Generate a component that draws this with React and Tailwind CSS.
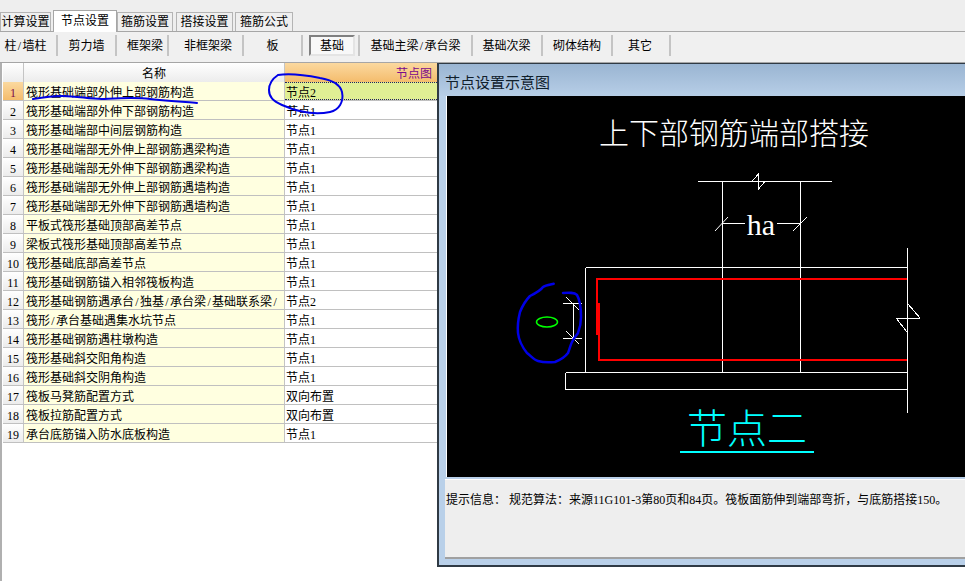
import React from "react";

const FONT = '"Liberation Serif","Noto Sans CJK SC",serif';

const tabs = [
  { t: "计算设置", w: "w-[51px]", cls: "ml-0" },
  { t: "节点设置", w: "w-[64px]", active: true, cls: "ml-[2px]" },
  { t: "箍筋设置", w: "w-[56px]", cls: "ml-0" },
  { t: "搭接设置", w: "w-[57px]", cls: "ml-[3px]" },
  { t: "箍筋公式", w: "w-[58px]", cls: "ml-[2px]" },
];

const tools = [
  { t: "柱/墙柱", w: "w-[58px]", pad: "pr-[5px]" },
  { t: "剪力墙", w: "w-[59px]", pad: "" },
  { t: "框架梁", w: "w-[52px]", pad: "pl-[6px]" },
  { t: "非框架梁", w: "w-[75px]", pad: "pl-[5px]" },
  { t: "板", w: "w-[59px]", pad: "" },
  { t: "基础", w: "w-[57px]", active: true, pad: "" },
  { t: "基础主梁/承台梁", w: "w-[113px]", pad: "" },
  { t: "基础次梁", w: "w-[70px]", pad: "pr-[1px]" },
  { t: "砌体结构", w: "w-[70px]", pad: "" },
  { t: "其它", w: "w-[58px]", pad: "pr-[2px]" },
];

const rows = [
  ["筏形基础端部外伸上部钢筋构造", "节点2"],
  ["筏形基础端部外伸下部钢筋构造", "节点1"],
  ["筏形基础端部中间层钢筋构造", "节点1"],
  ["筏形基础端部无外伸上部钢筋遇梁构造", "节点1"],
  ["筏形基础端部无外伸下部钢筋遇梁构造", "节点1"],
  ["筏形基础端部无外伸上部钢筋遇墙构造", "节点1"],
  ["筏形基础端部无外伸下部钢筋遇墙构造", "节点1"],
  ["平板式筏形基础顶部高差节点", "节点1"],
  ["梁板式筏形基础顶部高差节点", "节点1"],
  ["筏形基础底部高差节点", "节点1"],
  ["筏形基础钢筋锚入相邻筏板构造", "节点1"],
  ["筏形基础钢筋遇承台/独基/承台梁/基础联系梁/", "节点2"],
  ["筏形/承台基础遇集水坑节点", "节点1"],
  ["筏形基础钢筋遇柱墩构造", "节点1"],
  ["筏形基础斜交阳角构造", "节点1"],
  ["筏形基础斜交阴角构造", "节点1"],
  ["筏板马凳筋配置方式", "双向布置"],
  ["筏板拉筋配置方式", "双向布置"],
  ["承台底筋锚入防水底板构造", "节点1"],
];

function Slashed({ text }) {
  const parts = text.split("/");
  return parts.map((p, i) => (
    <React.Fragment key={i}>
      {p}
      {i < parts.length - 1 ? <span className="inline-block w-[6px] text-center">/</span> : null}
    </React.Fragment>
  ));
}

function Diagram() {
  return (
    <svg viewBox="447 96 518 381" className="block w-full h-full" shapeRendering="crispEdges">
      <text x="734" y="144" textAnchor="middle" fontSize="30" fontWeight="300" fill="#fff" fontFamily={FONT}>上下部钢筋端部搭接</text>
      <g stroke="#fff" strokeWidth="1" fill="none">
        <path d="M698 181.5H832" />
        <path d="M752 181.5L758 174.5V189.5L765 181.5" />
        <path d="M722.5 181V372M800.5 181V372" />
        <path d="M722 223.5H745M777 223.5H800" />
        <path d="M715 231L728 217M793 231L807 217" shapeRendering="auto" />
        <path d="M585.5 267.5H907.5M585.5 267.5V372.5M565.5 372.5H907.5M565.5 372.5V389.5H907.5" />
        <path d="M907.5 248V413" />
        <path d="M896 318.5H920M908 304L920 318M896 318L907 332" />
        <path d="M563 303.5H582M563 338.5H582M573.5 303V338" />
        <path d="M566 297L579 310M566 331L579 344" shapeRendering="auto" />
      </g>
      <g fill="none" stroke="#ff0000">
        <path d="M907 279H597V335" strokeWidth="2" />
        <path d="M599 303V360H907" strokeWidth="2" />
        <path d="M598.5 303V335" strokeWidth="3" />
      </g>
      <ellipse cx="547" cy="322" rx="10.5" ry="5" fill="none" stroke="#00ff00" strokeWidth="1.5" shapeRendering="auto" />
      <text x="761" y="235" textAnchor="middle" fontSize="30" fill="#fff" fontFamily={FONT}>ha</text>
      <text x="747" y="443" textAnchor="middle" fontSize="40" fontWeight="300" fill="#00ffff" fontFamily={FONT}>节点二</text>
      <path d="M680 452H814" stroke="#00ffff" strokeWidth="2" />
    </svg>
  );
}

export default function App() {
  return (
    <div
      className="relative w-[965px] h-[581px] overflow-hidden bg-white text-[12px] leading-[19px] text-black flex flex-col"
      style={{ fontFamily: FONT }}
    >
      {/* tab strip */}
      <div className="h-[32px] shrink-0 bg-[#eeeeee] border-b border-[#a6a6a6] flex items-end">
        {tabs.map((t) => (
          <div
            key={t.t}
            className={`${t.w} ${t.cls} flex items-center justify-center border border-b-0 text-[12px] ${
              t.active
                ? "h-[22px] -mb-[1px] bg-white border-[#a6a6a6]"
                : "h-[19px] pt-[1px] bg-[#efefef] border-[#b4b4b4]"
            }`}
          >
            {t.t}
          </div>
        ))}
      </div>

      {/* tool bar */}
      <div className="h-[30px] shrink-0 bg-[#f0f0f0] flex items-start pt-[3px]">
        {tools.map((t) => (
          <div key={t.t} className={`${t.w} ${t.pad} h-[21px] border-r-2 border-[#c4c4c4] flex items-center justify-center`}>
            {t.active ? (
              <div className="w-[46px] h-[21px] ml-[3px] pt-[1px] border-2 border-[#808080] border-r-[#e4e4e4] border-b-[#e4e4e4] bg-[#f8f8f8] flex items-center justify-center">
                {t.t}
              </div>
            ) : (
              <div className="pt-[2px]">
                <Slashed text={t.t} />
              </div>
            )}
          </div>
        ))}
      </div>

      {/* body */}
      <div className="flex-1 min-h-0 flex border-t border-[#a6a6a6]">
        {/* grid */}
        <div className="w-[437px] shrink-0 border-l-2 border-[#b0b0b0] pl-[1px] leading-[23px]">
          <div className="flex h-[19px]">
            <div className="w-[21px] shrink-0 bg-gradient-to-b from-white to-[#ececec] border-r border-[#c4c4c4]" />
            <div className="w-[261px] shrink-0 bg-gradient-to-b from-white to-[#ececec] border-r border-[#c4c4c4] text-center">名称</div>
            <div className="flex-1 bg-gradient-to-b from-[#fbd99f] to-[#f4bc6c] text-right pr-[5px] text-[#7a0a8c]">节点图</div>
          </div>
          {rows.map((r, i) => (
            <div key={i} className="flex h-[19px] border-b border-[#c0c0c0]">
              <div
                className={`w-[21px] shrink-0 text-center border-r border-[#c4c4c4] ${
                  i === 0
                    ? "bg-gradient-to-b from-[#fbd99f] to-[#f4bc6c] text-[#7a0a4c]"
                    : "bg-gradient-to-b from-white to-[#ececec]"
                }`}
              >
                {i + 1}
              </div>
              <div className="w-[261px] shrink-0 bg-[#ffffe0] border-r border-[#c4c4c4] pl-[2px] whitespace-nowrap overflow-hidden">
                <Slashed text={r[0]} />
              </div>
              <div
                className={`flex-1 pl-[1px] overflow-hidden ${
                  i === 0 ? "bg-[#e0ef94] border-y border-dotted border-[#202060] leading-[21px]" : "bg-white"
                }`}
              >
                {r[1]}
              </div>
            </div>
          ))}
        </div>

        {/* dialog */}
        <div className="flex-1 h-[504px] flex flex-col border-l-2 border-t border-b-2 border-[#2f3a44] bg-[#b9d0e9]">
          <div className="h-[32px] shrink-0 bg-gradient-to-b from-[#9ab5d2] to-[#b7cee7] pl-[6px] pt-[9px] text-[15px] leading-[20px] text-[#10202c]">
            节点设置示意图
          </div>
          <div className="h-[383px] shrink-0 pl-[7px]">
            <div className="h-[381px] bg-black border-l border-white">
              <Diagram />
            </div>
          </div>
          <div className="h-[80px] shrink-0 ml-[6px] bg-[#eeeeee] border-b-2 border-t border-[#a0a0a0] border-t-white pl-[1px] pt-[11px] whitespace-nowrap">
            提示信息： 规范算法：来源11G101-3第80页和84页。筏板面筋伸到端部弯折，与底筋搭接150。
          </div>
        </div>
      </div>

      {/* hand-drawn annotations */}
      <svg className="absolute inset-0 pointer-events-none" width="965" height="581" fill="none" stroke="#0000e6" strokeWidth="2" strokeLinecap="round" strokeLinejoin="round">
        <path d="M33 99C45 97 52 96 62 96C78 96 88 99 102 99C122 98 135 97 150 99C168 101 185 102 197 103" />
        <path d="M278 75C290 73 305 75 320 78C332 80 340 84 342 92C344 102 339 110 330 112C315 115 298 112 282 105C273 101 269 97 269 90C269 84 272 79 278 75" />
        <path d="M553.7 283.7C548 285 545 285.5 543 287C541 290 538 292 530 296C526 300 522 307 520 312C518 320 517.5 328 518 333C519 342 523 348 527 353C531 356 534 360 538 361C543 362.5 550 362.5 555 362C560 360 565 357 568 353C569.5 349 570.5 345 572 342C574 338 576 336 578 333C580 328 581 322 581 317C581 308 580 300 577 295C574 292 569 292.5 563 293" strokeWidth="2.5" />
      </svg>
    </div>
  );
}
